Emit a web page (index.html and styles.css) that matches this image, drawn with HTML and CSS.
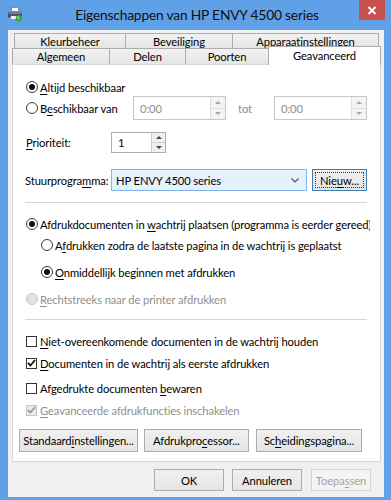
FILE: index.html
```html
<!DOCTYPE html>
<html>
<head>
<meta charset="utf-8">
<title>Eigenschappen van HP ENVY 4500 series</title>
<link rel="stylesheet" href="styles.css">
</head>
<body>
<div class="window">
  <div class="titlebar">
    <div class="tb-left">
      <svg class="app-icon" width="16" height="16" viewBox="0 0 16 16">
        <rect x="4.5" y="1.5" width="7" height="4" fill="#fff" stroke="#8a8a8a"/>
        <path d="M1 6.5h14v5H1z" fill="#4e5560"/>
        <rect x="2" y="7" width="12" height="1" fill="#7c838c"/>
        <rect x="4" y="10" width="7" height="3" fill="#f2f2f2"/>
        <circle cx="12" cy="12.5" r="3.3" fill="#3aa84a"/>
        <circle cx="11.3" cy="11.6" r="1.2" fill="#8fdc8a"/>
      </svg>
    </div>
    <div class="title">Eigenschappen van HP ENVY 4500 series</div>
    <div class="tb-right">
      <div class="close">
        <svg width="10" height="9" viewBox="0 0 10 9"><path d="M1.5 1l7 7M8.5 1l-7 7" stroke="#fff" stroke-width="2"/></svg>
      </div>
    </div>
  </div>

  <div class="client">
    <div class="tabs">
      <div class="tabrow row-back">
        <div class="tab t-kleur">Kleurbeheer</div>
        <div class="tab t-bev">Beveiliging</div>
        <div class="tab t-app">Apparaatinstellingen</div>
      </div>
      <div class="tabrow row-front">
        <div class="tab t-alg">Algemeen</div>
        <div class="tab t-del">Delen</div>
        <div class="tab t-poo">Poorten</div>
        <div class="tab t-gea active">Geavanceerd</div>
      </div>
    </div>

    <div class="panel">
      <div class="opt r-always">
        <span class="radio on"></span><span><u>A</u>ltijd beschikbaar</span>
      </div>

      <div class="r-from">
        <div class="opt from-label">
          <span class="radio"></span><span>B<u>e</u>schikbaar van</span>
        </div>
        <div class="spin time dis">
          <span class="spin-val">0:00</span>
          <span class="spin-btns"><span class="arr up"></span><span class="arr down"></span></span>
        </div>
        <span class="tot">tot</span>
        <div class="spin time dis">
          <span class="spin-val">0:00</span>
          <span class="spin-btns"><span class="arr up"></span><span class="arr down"></span></span>
        </div>
      </div>

      <div class="r-prio">
        <span class="field-label prio-label"><u>P</u>rioriteit:</span>
        <div class="spin prio">
          <span class="spin-val">1</span>
          <span class="spin-btns"><span class="arr up"></span><span class="arr down"></span></span>
        </div>
      </div>

      <div class="r-driver">
        <span class="field-label drv-label">Stuurprogra<u>m</u>ma:</span>
        <div class="select">
          <span>HP ENVY 4500 series</span>
          <svg width="8" height="5" viewBox="0 0 8 5"><path d="M0.5 0.5l3.5 3.5 3.5-3.5" fill="none" stroke="#555" stroke-width="1.2"/></svg>
        </div>
        <div class="btn btn-new"><span class="focus">Nie<u>u</u>w...</span></div>
      </div>

      <div class="sep sep1"></div>

      <div class="opt r-spool">
        <span class="radio on"></span><span>Afdrukdocumenten in <u>w</u>achtrij plaatsen (programma is eerder gereed)</span>
      </div>
      <div class="opt r-sub1">
        <span class="radio"></span><span>A<u>f</u>drukken zodra de laatste pagina in de wachtrij is geplaatst</span>
      </div>
      <div class="opt r-sub2">
        <span class="radio on"></span><span><u>O</u>nmiddellijk beginnen met afdrukken</span>
      </div>
      <div class="opt r-direct disabled">
        <span class="radio dis"></span><span><u>R</u>echtstreeks naar de printer afdrukken</span>
      </div>

      <div class="sep sep2"></div>

      <div class="opt cb1">
        <span class="check"></span><span><u>N</u>iet-overeenkomende documenten in de wachtrij houden</span>
      </div>
      <div class="opt cb2">
        <span class="check on"><svg width="9" height="8" viewBox="0 0 9 8"><path d="M1 4l2.5 2.5L8 1" fill="none" stroke="#111" stroke-width="1.8"/></svg></span><span><u>D</u>ocumenten in de wachtrij als eerste afdrukken</span>
      </div>
      <div class="opt cb3">
        <span class="check"></span><span>Afgedrukte documenten <u>b</u>ewaren</span>
      </div>
      <div class="opt cb4 disabled">
        <span class="check dis on"><svg width="9" height="8" viewBox="0 0 9 8"><path d="M1 4l2.5 2.5L8 1" fill="none" stroke="#9a9a9a" stroke-width="1.8"/></svg></span><span><u>G</u>eavanceerde afdrukfuncties inschakelen</span>
      </div>

      <div class="panel-buttons">
        <div class="btn b-std">Standaard<u>i</u>nstellingen...</div>
        <div class="btn b-proc">Afdrukpro<u>c</u>essor...</div>
        <div class="btn b-sep">Sc<u>h</u>eidingspagina...</div>
      </div>
    </div>

    <div class="dlg-buttons">
      <div class="btn b-ok">OK</div>
      <div class="btn b-cancel">Annuleren</div>
      <div class="btn b-apply dis">Toepa<u>s</u>sen</div>
    </div>
  </div>
</div>
</body>
</html>
```
FILE: styles.css
```css
* { box-sizing: border-box; }
html, body { margin: 0; padding: 0; }
body {
  width: 391px;
  height: 500px;
  overflow: hidden;
  font-family: Lato, "Noto Sans", sans-serif;
  font-size: 11.2px;
  letter-spacing: -0.1px;
  color: #000;
}
u { text-decoration-thickness: 1px; text-underline-offset: 2px; }

.window {
  width: 391px;
  height: 500px;
  background: #60a0e6;
  display: flex;
  flex-direction: column;
}

/* title bar */
.titlebar {
  height: 30px;
  flex: none;
  display: grid;
  grid-template-columns: 1fr auto 1fr;
}
.tb-left { padding: 6px 0 0 7px; }
.app-icon { display: block; }
.title {
  font-size: 13.8px;
  letter-spacing: -0.2px;
  line-height: 30px;
  color: #111;
  padding-left: 3px;
}
.tb-right { display: flex; justify-content: flex-end; }
.close {
  width: 26px;
  height: 20px;
  margin-right: 6px;
  background: #c7504c;
  display: flex;
  align-items: center;
  justify-content: center;
}

/* client area */
.client {
  flex: 1;
  margin: 0 7px 3px 8px;
  background: #f0f0f0;
  display: flex;
  flex-direction: column;
}

/* tabs */
.tabs { margin: 3px 0 0 4px; }
.tabrow { display: flex; }
.row-back { height: 15px; padding-left: 2px; }
.row-front { height: 16px; }
.tab {
  border: 1px solid #acacac;
  border-bottom: none;
  background: linear-gradient(#f2f2f2, #e4e4e4);
  text-align: center;
  line-height: 16px;
  margin-left: -1px;
  color: #000;
}
.tab:first-child { margin-left: 0; }
.t-kleur { width: 112px; }
.t-bev { width: 108px; }
.t-app { width: 147px; }
.t-alg { width: 98px; }
.t-del { width: 77px; }
.t-poo { width: 84px; }
.t-gea { width: 113px; }
.tab.active {
  background: #fff;
  margin-top: -2px;
  height: 19px;
  z-index: 2;
  line-height: 17px;
}

/* panel */
.panel {
  width: 369px;
  height: 398px;
  margin-left: 4px;
  background: #fff;
  border: 1px solid #d9d9d9;
  padding: 0 0 0 13px;
  display: flex;
  flex-direction: column;
}

.opt {
  display: flex;
  align-items: center;
  height: 16px;
  white-space: nowrap;
}
.radio {
  width: 12px;
  height: 12px;
  flex: none;
  border: 1px solid #3a3a3a;
  border-radius: 50%;
  background: #fff;
  margin-right: 2px;
  display: flex;
  align-items: center;
  justify-content: center;
}
.radio.on::after {
  content: "";
  width: 6px;
  height: 6px;
  border-radius: 50%;
  background: #111;
}
.radio.dis { border-color: #c4c4c4; background: #e2e2e2; }
.disabled { color: #8f8f8f; }

.check {
  width: 11px;
  height: 11px;
  flex: none;
  border: 1px solid #333;
  background: #fff;
  margin-right: 3px;
  display: flex;
  align-items: center;
  justify-content: center;
}
.check.dis { border-color: #c4c4c4; background: #ececec; }

.r-always { margin-top: 14px; }

.r-from {
  margin-top: 1px;
  height: 24px;
  display: flex;
  align-items: center;
}
.from-label { width: 107px; }
.spin {
  display: flex;
  border: 1px solid #abadb3;
  background: #fff;
}
.spin.time { width: 93px; height: 24px; }
.spin.dis { border-color: #c8c8c8; }
.spin-val {
  flex: 1;
  padding-left: 6px;
  display: flex;
  align-items: center;
}
.spin.dis .spin-val { color: #8d8d8d; }
.spin-btns {
  width: 15px;
  flex: none;
  display: flex;
  flex-direction: column;
  border-left: 1px solid #e0e0e0;
  background: #f4f4f4;
}
.arr {
  flex: 1;
  display: flex;
  align-items: center;
  justify-content: center;
}
.arr.up { border-bottom: 1px solid #e0e0e0; }
.arr::after {
  content: "";
  border-left: 3px solid transparent;
  border-right: 3px solid transparent;
}
.arr.up::after { border-bottom: 3px solid #444; }
.arr.down::after { border-top: 3px solid #444; }
.spin.dis .arr.up::after { border-bottom-color: #a8a8a8; }
.spin.dis .arr.down::after { border-top-color: #a8a8a8; }
.tot {
  width: 48px;
  padding-left: 12px;
  color: #8d8d8d;
}

.r-prio {
  margin-top: 12px;
  height: 21px;
  display: flex;
  align-items: center;
}
.field-label { display: block; }
.prio-label { width: 85px; }
.spin.prio { width: 55px; height: 21px; }
.spin.prio .spin-btns { width: 14px; background: #f0f0f0; border-left-color: #d0d0d0; }
.spin.prio .arr.up { border-bottom-color: #d0d0d0; }

.r-driver {
  margin-top: 16px;
  height: 22px;
  display: flex;
  align-items: center;
}
.drv-label { width: 86px; margin-left: -1px; }
.select {
  width: 196px;
  height: 22px;
  border: 1px solid #7eb4ea;
  background: #e5f1fb;
  display: flex;
  align-items: center;
  justify-content: space-between;
  padding: 0 7px 0 4px;
}
.btn {
  display: flex;
  align-items: center;
  justify-content: center;
  border: 1px solid #acacac;
  background: linear-gradient(#f0f0f0, #e5e5e5);
  white-space: nowrap;
}
.btn-new {
  width: 55px;
  height: 22px;
  margin-left: 5px;
  border-color: #3c7fb1;
  padding: 2px;
}
.focus {
  flex: 1;
  align-self: stretch;
  border: 1px dotted #333;
  display: flex;
  align-items: center;
  justify-content: center;
}

.sep {
  height: 1px;
  width: 342px;
  margin-left: -1px;
  background: #d6d6d6;
  flex: none;
}
.sep1 { margin-top: 11px; }
.r-spool { margin-top: 13px; width: 344px; overflow: hidden; }
.r-sub1 { margin-top: 5px; padding-left: 15px; }
.r-sub2 { margin-top: 11px; padding-left: 15px; }
.r-direct { margin-top: 11px; }
.sep2 { margin-top: 12px; }

.cb1 { margin-top: 13px; }
.cb2 { margin-top: 6px; }
.cb3 { margin-top: 9px; }
.cb4 { margin-top: 6px; }

.panel-buttons {
  margin-top: 11px;
  margin-left: -7px;
  display: flex;
  height: 23px;
}
.panel-buttons .btn { height: 23px; }
.b-std { width: 119px; }
.b-proc { width: 105px; margin-left: 6px; }
.b-sep { width: 106px; margin-left: 7px; }

.dlg-buttons {
  margin-top: 7px;
  padding-right: 13px;
  display: flex;
  justify-content: flex-end;
}
.dlg-buttons .btn { height: 22px; }
.b-ok { width: 70px; }
.b-cancel { width: 70px; margin-left: 8px; }
.b-apply { width: 60px; margin-left: 9px; }
.btn.dis { border-color: #d5d5d5; background: #f4f4f4; color: #a3a3a3; }
```
